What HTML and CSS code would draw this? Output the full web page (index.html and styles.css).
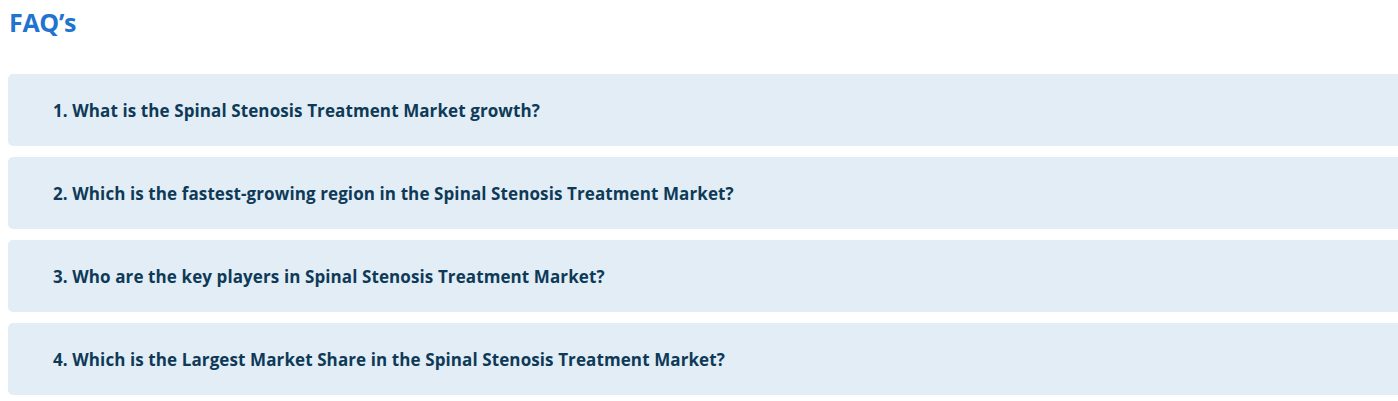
FILE: index.html
```html
<!DOCTYPE html>
<html>
<head>
<meta charset="utf-8">
<link rel="stylesheet" href="styles.css">
</head>
<body>
<section class="faq">
  <h2 class="faq-title">FAQ’s</h2>
  <div class="faq-list">
    <div class="faq-item"><span class="faq-q">1. What is the Spinal Stenosis Treatment Market growth?</span></div>
    <div class="faq-item"><span class="faq-q">2. Which is the fastest-growing region in the Spinal Stenosis Treatment Market?</span></div>
    <div class="faq-item"><span class="faq-q">3. Who are the key players in Spinal Stenosis Treatment Market?</span></div>
    <div class="faq-item"><span class="faq-q">4. Which is the Largest Market Share in the Spinal Stenosis Treatment Market?</span></div>
  </div>
</section>
</body>
</html>
```
FILE: styles.css
```css
html, body {
  margin: 0;
  padding: 0;
  background: #ffffff;
  overflow: hidden;
}
body {
  font-family: "Open Sans", "Noto Sans", sans-serif;
}
.faq {
  padding: 0 0 0 8px;
}
.faq-title {
  margin: 0;
  padding-top: 6px;
  height: 74px;
  box-sizing: border-box;
  font-size: 25px;
  font-weight: 700;
  color: #1f74cf;
  line-height: 32px;
  padding-left: 1px;
  letter-spacing: -0.3px;
}
.faq-list {
  display: flex;
  flex-direction: column;
  gap: 11px;
  margin-right: -20px;
}
.faq-item {
  height: 72px;
  background: #e2edf6;
  border-radius: 5px;
  display: flex;
  align-items: center;
  padding-left: 45px;
}
.faq-q {
  font-size: 17px;
  font-weight: 700;
  color: #0e3a58;
  letter-spacing: 0.1px;
}
```
